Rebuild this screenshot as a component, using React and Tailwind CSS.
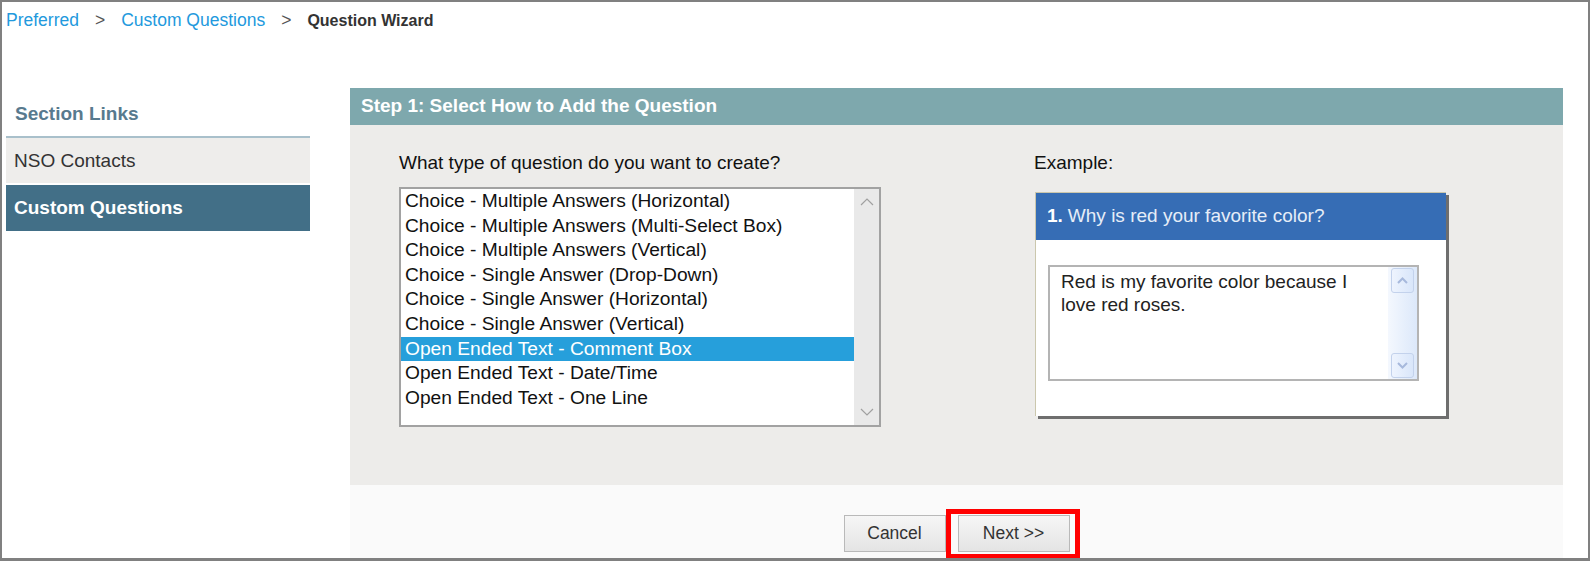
import React from 'react'

const options = [
  'Choice - Multiple Answers (Horizontal)',
  'Choice - Multiple Answers (Multi-Select Box)',
  'Choice - Multiple Answers (Vertical)',
  'Choice - Single Answer (Drop-Down)',
  'Choice - Single Answer (Horizontal)',
  'Choice - Single Answer (Vertical)',
  'Open Ended Text - Comment Box',
  'Open Ended Text - Date/Time',
  'Open Ended Text - One Line',
]

function Chevron({ up, className, color = '#a0a0a0' }) {
  return (
    <svg width="14" height="8" viewBox="0 0 14 8" className={className}>
      <polyline
        points={up ? '1,7 7,1 13,7' : '1,1 7,7 13,1'}
        fill="none"
        stroke={color}
        strokeWidth="1.2"
      />
    </svg>
  )
}

function XpButton({ up }) {
  return (
    <div className="w-[23px] h-[25px] rounded-[3px] border border-[#c3d2ec] bg-gradient-to-r from-[#eef4fe] to-[#d9e6fa] flex items-center justify-center">
      <svg width="11" height="7" viewBox="0 0 11 7">
        <polyline
          points={up ? '1,6 5.5,1.5 10,6' : '1,1 5.5,5.5 10,1'}
          fill="none"
          stroke="#a7b9dc"
          strokeWidth="2"
        />
      </svg>
    </div>
  )
}

export default function App() {
  return (
    <div className="relative w-[1590px] h-[561px] overflow-hidden bg-white border-t-2 border-x-2 border-b-[3px] border-[#808080] font-['Liberation_Sans',Arial,sans-serif]">
      {/* Breadcrumb */}
      <div className="flex items-center h-[23px] mt-[7px] pl-[4px] text-[17.5px] leading-[23px]">
        <span className="text-[#2299dd]">Preferred</span>
        <span className="mx-[16px] text-[#555]">&gt;</span>
        <span className="text-[#2299dd]">Custom Questions</span>
        <span className="mx-[16px] text-[#555]">&gt;</span>
        <span className="font-bold text-[16px] text-[#333]">Question Wizard</span>
      </div>

      <div className="flex mt-[56px]">
        {/* Sidebar */}
        <div className="w-[304px] ml-[4px] shrink-0">
          <div className="h-[50px] flex items-center pl-[9px] pt-[5px] text-[19px] font-bold text-[#587a8e] border-b-2 border-[#a9c0cb]">
            Section Links
          </div>
          <div className="h-[45px] flex items-center pl-[8px] pt-[2px] bg-[#eeedeb] text-[19px] text-[#333]">
            NSO Contacts
          </div>
          <div className="h-[46px] mt-[2px] flex items-center pl-[8px] pt-[1px] bg-[#426f87] text-[19px] font-bold text-white">
            Custom Questions
          </div>
        </div>

        {/* Main panel */}
        <div className="w-[1213px] ml-[40px] shrink-0">
          <div className="h-[37px] flex items-center pl-[11px] bg-[#7ea8ad] text-white font-bold text-[19px]">
            Step 1: Select How to Add the Question
          </div>

          <div className="h-[360px] bg-[#edecea] flex pt-[26px]">
            <div className="ml-[49px] w-[482px]">
              <div className="text-[19px] leading-[23px] text-[#111]">What type of question do you want to create?</div>
              <div className="mt-[13px] h-[240px] border-2 border-[#a2a2a2] bg-white flex">
                <div className="flex-1">
                  {options.map((o) => (
                    <div
                      key={o}
                      className={`h-[24.6px] leading-[24.6px] pl-[4px] text-[19.2px] whitespace-nowrap ${
                        o === 'Open Ended Text - Comment Box' ? 'bg-[#269fdb] text-white' : 'text-[#111]'
                      }`}
                    >
                      {o}
                    </div>
                  ))}
                </div>
                <div className="w-[25px] bg-[#e9e9e9] flex flex-col items-center justify-between py-[9px]">
                  <Chevron up />
                  <Chevron />
                </div>
              </div>
            </div>

            <div className="ml-[153px]">
              <div className="text-[19px] leading-[23px] text-[#111]">Example:</div>
              <div className="mt-[18px] ml-[1px] w-[411px] h-[224px] bg-white border-l border-t border-[#cbc7ad] shadow-[3px_3px_0_#6e6e6e]">
                <div className="h-[47px] bg-[#366db5] flex items-center pl-[11px] text-[19px]">
                  <span className="font-bold text-white">1.</span>
                  <span className="ml-[5px] text-[#e6edf8]">Why is red your favorite color?</span>
                </div>
                <div className="mt-[25px] ml-[12px] w-[371px] h-[116px] border-2 border-[#b4b4b4] flex">
                  <div className="flex-1 pl-[11px] pt-[3px] text-[19px] leading-[23px] text-[#222]">
                    Red is my favorite color because I<br />love red roses.
                  </div>
                  <div className="w-[29px] bg-gradient-to-r from-[#f4f8fe] to-[#dce8fa] flex flex-col items-center justify-between py-[1px]">
                    <XpButton up />
                    <XpButton />
                  </div>
                </div>
              </div>
            </div>
          </div>

          {/* Buttons */}
          <div className="h-[100px] bg-[#fafafa] flex justify-center pt-[30px]">
            <div className="flex gap-[12px] h-[37px]">
              <button className="w-[102px] h-[37px] border border-[#b9b9b9] bg-gradient-to-b from-[#f6f6f6] to-[#e4e4e4] text-[17.5px] text-[#333]">
                Cancel
              </button>
              <div className="relative">
                <button className="w-[112px] h-[37px] border border-[#b9b9b9] bg-gradient-to-b from-[#f6f6f6] to-[#e4e4e4] text-[17.5px] text-[#333]">
                  Next &gt;&gt;
                </button>
                <div className="absolute -left-[12px] -top-[6px] w-[134px] h-[50px] border-[5px] border-[#ff0000] z-10" />
              </div>
            </div>
          </div>
        </div>
      </div>
    </div>
  )
}
